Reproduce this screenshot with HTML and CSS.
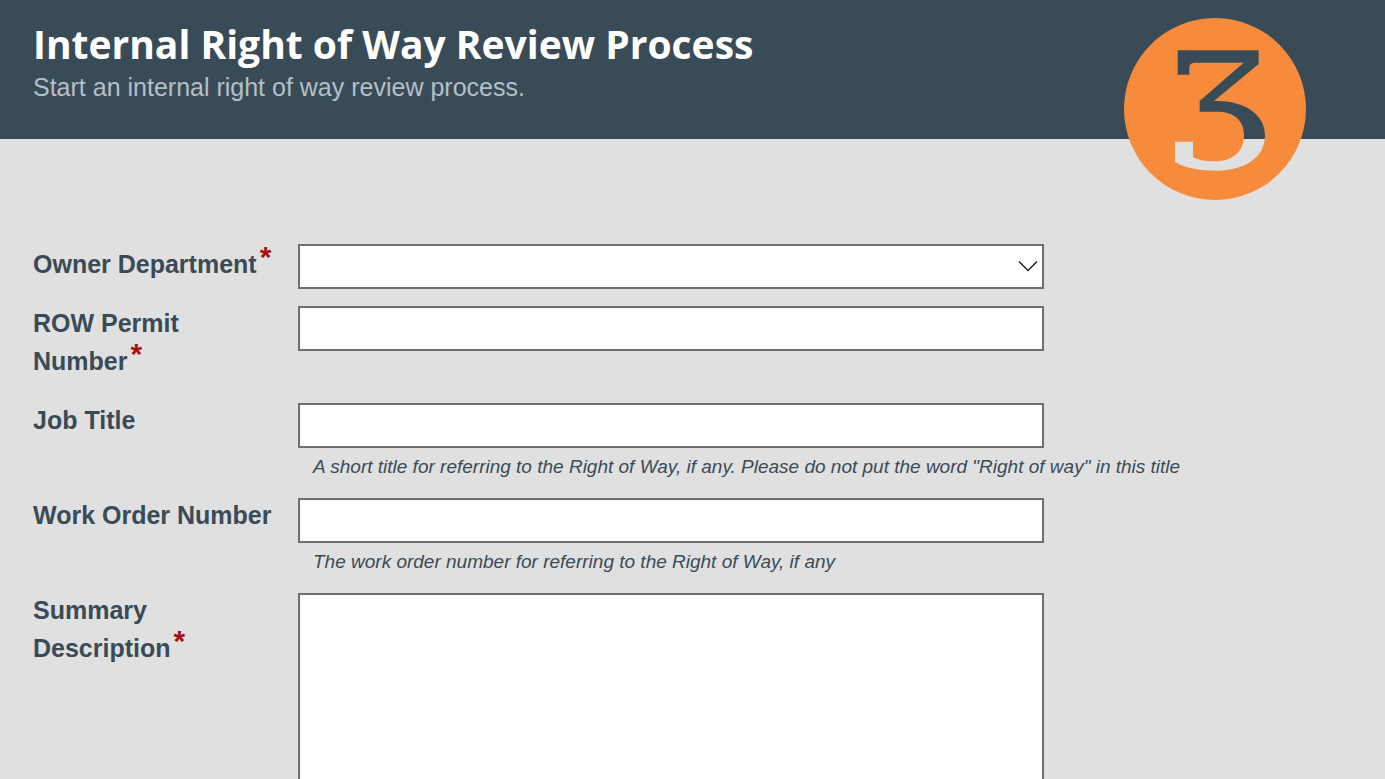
FILE: index.html
```html
<!DOCTYPE html>
<html lang="en">
<head>
<meta charset="utf-8">
<meta name="viewport" content="width=device-width, initial-scale=1">
<title>Internal Right of Way Review Process</title>
<link rel="stylesheet" href="styles.css">
</head>
<body>
<header class="banner">
  <h1 class="banner-title">Internal Right of Way Review Process</h1>
  <p class="banner-subtitle">Start an internal right of way review process.</p>
  <svg class="logo" viewBox="42 40 546 546" role="img" aria-label="Logo">
    <path fill="#f68b3c" fill-rule="evenodd" d="M315 40a273 273 0 1 1 0 546a273 273 0 1 1 0-546Z
      M203 137H446V178L312 289C395 285 465 325 465 392C465 455 410 498 320 498C270 498 225 490 195 472V411H249V457C265 467 290 470 315 470C370 470 402 440 402 392C402 345 370 321 320 321H269V289L401 174H256Q238 174 238 190V210H203Z"/>
  </svg>
</header>
<main>
  <form class="form">
    <div class="field field-select">
      <label class="label" for="owner">Owner Department<span class="required">*</span></label>
      <div class="control">
        <div class="select-box">
          <select class="input select" id="owner" required><option value=""></option></select>
          <svg class="chevron" viewBox="0 0 20 12" aria-hidden="true"><path d="M1 1.5L10 10.5L19 1.5" fill="none" stroke="#222" stroke-width="1.5"/></svg>
        </div>
      </div>
    </div>
    <div class="field">
      <label class="label" for="permit">ROW Permit Number<span class="required">*</span></label>
      <div class="control"><input class="input" id="permit" type="text" required></div>
    </div>
    <div class="field">
      <label class="label" for="job">Job Title</label>
      <div class="control">
        <input class="input" id="job" type="text" aria-describedby="job-hint">
        <p class="hint" id="job-hint">A short title for referring to the Right of Way, if any. Please do not put the word "Right of way" in this title</p>
      </div>
    </div>
    <div class="field">
      <label class="label" for="order">Work Order Number</label>
      <div class="control">
        <input class="input" id="order" type="text" aria-describedby="order-hint">
        <p class="hint" id="order-hint">The work order number for referring to the Right of Way, if any</p>
      </div>
    </div>
    <div class="field">
      <label class="label" for="summary">Summary Description<span class="required">*</span></label>
      <div class="control"><textarea class="input textarea" id="summary" rows="8" required></textarea></div>
    </div>
  </form>
</main>
</body>
</html>
```
FILE: styles.css
```css
* {
  box-sizing: border-box;
}

body {
  margin: 0;
  background: #e0e0e0;
  color: #3a4b58;
  font-family: "Liberation Sans", Arial, sans-serif;
}

.banner {
  position: relative;
  padding: 19px 33px 35px;
  background: #3a4b58;
}

.banner-title {
  margin: 0 0 1px;
  color: #fff;
  font-family: "Trebuchet MS", "Open Sans", sans-serif;
  font-size: 39px;
  font-weight: 700;
  line-height: 50px;
}

.banner-subtitle {
  margin: 0;
  color: #b4bfc8;
  font-size: 25px;
  line-height: 34px;
}

.logo {
  position: absolute;
  top: 18px;
  right: 79px;
  width: 182px;
  height: 182px;
}

.form {
  display: flex;
  flex-direction: column;
  gap: 17px;
  padding: 105px 33px 32px;
}

.field {
  display: grid;
  grid-template-columns: 265px 1fr;
  align-items: start;
}

.label {
  margin-top: -2px;
  padding: 0 25px 6px 0;
  font-size: 25px;
  font-weight: 700;
  line-height: 38px;
}

.field-select .label {
  margin-top: 1px;
}

.required {
  margin-left: 3px;
  color: #a31212;
  font-size: 30px;
  line-height: 0;
  vertical-align: 6px;
}

.input {
  display: block;
  width: 100%;
  max-width: 746px;
  height: 45px;
  margin: 0;
  padding: 4px 12px;
  border: 2px solid #6f6f6f;
  border-radius: 0;
  background: #fff;
  color: #3a4b58;
  font: 25px "Liberation Sans", Arial, sans-serif;
}

.select-box {
  position: relative;
  max-width: 746px;
}

.select {
  appearance: none;
}

.chevron {
  position: absolute;
  top: 16px;
  right: 6px;
  width: 20px;
  height: 12px;
  pointer-events: none;
}

.textarea {
  height: 240px;
  resize: none;
}

.hint {
  margin: 5px 0 0;
  padding-left: 15px;
  font-size: 19px;
  font-style: italic;
  line-height: 28px;
}
```
